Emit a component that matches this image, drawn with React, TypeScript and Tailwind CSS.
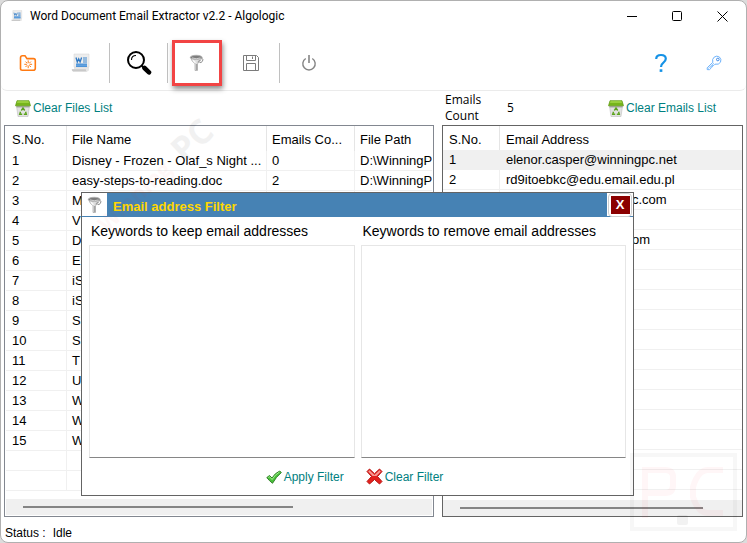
import React from "react";

const files = [
  { name: "Disney - Frozen - Olaf_s Night ...", count: "0", path: "D:\\WinningP" },
  { name: "easy-steps-to-reading.doc", count: "2", path: "D:\\WinningP" },
  { name: "M" },
  { name: "V" },
  { name: "D" },
  { name: "E" },
  { name: "iS" },
  { name: "iS" },
  { name: "S" },
  { name: "S" },
  { name: "T" },
  { name: "U" },
  { name: "W" },
  { name: "W" },
  { name: "W" },
];

const emails = [
  { no: "1", address: "elenor.casper@winningpc.net" },
  { no: "2", address: "rd9itoebkc@edu.email.edu.pl" },
  { no: "", address: "c.com", tail: true },
  { no: "", address: "" },
  { no: "", address: "om", tail: true },
];

function FolderIcon() {
  return (
    <svg width="18" height="18" viewBox="0 0 18 18" fill="none" stroke="#ff7a12" strokeWidth="1.6">
      <path d="M1.5 15V4Q1.5 1.8 3.5 1.8H6L8 4.6H14.5Q16.3 4.6 16.3 6.4V14.2Q16.3 16.2 14.3 16.2H3.2Q1.5 16.2 1.5 14.5Z" />
      <path d="M9.2 6.4V9M9.2 11.6V14.2M5.3 10.3H7.9M10.5 10.3H13.1M6.5 7.6L8.2 9.3M10.2 11.3L11.9 13M11.9 7.6L10.2 9.3M8.2 11.3L6.5 13" strokeWidth="1" />
    </svg>
  );
}

function WordIcon({ size = 20 }: { size?: number }) {
  return (
    <svg width={size} height={size} viewBox="0 0 20 20">
      <path d="M3 1h15v15.5q0 2-2 2H2q-1.5-.5-1.3-2.3H3z" fill="#e6e6e6" />
      <path d="M3 1h15v13H3z" fill="#ededed" stroke="#d2d2d2" strokeWidth=".5" />
      <path d="M.8 16.2h14q0 2.3 1.5 2.3H2.2Q.9 18.3.8 16.2z" fill="#c9c9c9" />
      <path d="M5 4.5l1.300 4.500 1.400-3.200 1.400 3.200 1.500-4.500" fill="none" stroke="#2f79c4" strokeWidth="1.3" />
      <path d="M12 5h4M12 7h4M12 9h4" stroke="#3d87d0" strokeWidth="1.2" />
      <path d="M5 10.5h11v3.5H5z" fill="#4c93d8" />
      <path d="M5 12.2h11" stroke="#8cbcec" strokeWidth=".5" />
    </svg>
  );
}

function SearchIcon() {
  return (
    <svg width="26" height="26" viewBox="0 0 26 26" fill="none" stroke="#000">
      <circle cx="10" cy="10" r="8" strokeWidth="2" />
      <path d="M5.5 10Q5.5 5.5 10 5.5" strokeWidth="1.1" />
      <path d="M15.8 15.8L18 18" strokeWidth="2" />
      <path d="M18.5 18L23 22.300" strokeWidth="4.6" strokeLinecap="round" />
    </svg>
  );
}

function FunnelIcon() {
  return (
    <svg width="16" height="18" viewBox="0 0 16 18">
      <path d="M1.5 3.5Q2.5 7.2 6 9.800V16.500H8.500V9.800Q11.500 7.500 13 3.500z" fill="#dedede" stroke="#a3a3a3" strokeWidth=".7" />
      <path d="M7.700 10V16" stroke="#8f8f8f" strokeWidth=".9" />
      <path d="M4 6.200L6.500 8.800" stroke="#fafafa" strokeWidth="1.3" />
      <path d="M10.800 6L8.800 8.500" stroke="#999" strokeWidth="1.1" />
      <ellipse cx="7.200" cy="3.300" rx="5.900" ry="2" fill="#7d7d7d" stroke="#adadad" strokeWidth=".9" />
      <path d="M3 3.900Q7.200 5.600 11.500 3.900" stroke="#d8d8d8" strokeWidth=".9" fill="none" />
      <path d="M12.500 4.200Q15.300 4.900 13.200 7.600Q12 9 10.600 8.500" fill="none" stroke="#8f8f8f" />
    </svg>
  );
}

function SaveIcon() {
  return (
    <svg width="18" height="18" viewBox="0 0 18 18" fill="none" stroke="#7b7b7b">
      <path d="M1.5 1.5H14.5L16.5 3.5V16.5H1.5zM4.5 1.5V6.5H13.5V1.5M10.5 2.5V5M4.5 16.5V9.5H13.5V16.5" />
    </svg>
  );
}

function PowerIcon() {
  return (
    <svg width="18" height="18" viewBox="0 0 18 18" fill="none" stroke="#858585" strokeWidth="1.4">
      <path d="M5.7 4.5A6.2 6.2 0 1 0 12.3 4.5" />
      <path d="M9 1V9" strokeWidth="1.6" />
    </svg>
  );
}

function HelpIcon() {
  return (
    <svg width="16" height="20" viewBox="0 0 16 20" fill="none" stroke="#1592e6" strokeWidth="2.2">
      <path d="M3.200 6Q3.200 2 8 2Q12.800 2 12.800 5.800Q12.800 8 10.200 9.800Q8 11.300 8 14" />
      <path d="M8 16.300V18.900" strokeWidth="2.7" />
    </svg>
  );
}

function KeyIcon() {
  return (
    <svg width="16" height="16" viewBox="0 0 16 16" fill="none" stroke="#6db2fb" strokeWidth="1">
      <path d="M6.800 7.300Q5.800 4.200 8.200 2.100Q10.700.2 13.400 2Q15.800 4.300 14.500 7.200Q12.800 10 9 9.200L7.800 10.400L6.600 10.300L6.500 11.700L5.200 11.800L5 13.200L3.400 14.700L1.200 14.600V12.800Z" />
      <circle cx="11.8" cy="4.5" r="1.3" stroke="#3f8be8" />
      <path d="M2 13.700L8 8" strokeWidth=".7" />
    </svg>
  );
}

function BinIcon() {
  return (
    <svg width="16" height="17" viewBox="0 0 16 17">
      <path d="M1.5 6h13l-1.5 10.5H3z" fill="#e2e2e2" stroke="#bdbdbd" strokeWidth=".6" />
      <path d="M1.5 6h13v1.5h-13z" fill="#a8a8a8" />
      <path d="M2 .7h12L15.5 5.8H.5z" fill="#76b51b" stroke="#5d9910" strokeWidth=".7" />
      <path d="M2.5 1.2h11l.5 1.5H2z" fill="#a4d84a" />
      <path d="M6.3 10.5L8 8L9.7 10.5M10.6 11.8L11.3 14.3H8.8M7.2 14.3H4.7L5.5 11.8" fill="none" stroke="#5ba31c" strokeWidth="1.4" />
    </svg>
  );
}

function CheckIcon() {
  return (
    <svg width="16" height="16" viewBox="0 0 16 16">
      <path d="M.8 8.6L3.5 6.5L6 9Q9 4 13.8 2L15.3 3.6Q10 8 6.5 14.3Q3.5 12 .8 8.6z" fill="#4ac03b" stroke="#28751f" strokeWidth=".9" />
      <path d="M2.3 8.5L3.5 7.7L6.1 10.5Q9 5.5 13.5 3" fill="none" stroke="#a2ef8e" />
    </svg>
  );
}

function CrossIcon() {
  return (
    <svg width="17" height="17" viewBox="0 0 17 17">
      <path d="M3.5 1L8.5 5.7L13.5 1L16 3.5L11.5 8.5L16 13.5L13.5 16L8.5 11.5L3.5 16L1 13.5L5.5 8.5L1 3.5z" fill="#e3211d" stroke="#b81512" strokeLinejoin="round" />
      <path d="M3.5 2.3L8.5 7L13.5 2.3L14.8 3.6L10.5 8H6.5L2.2 3.6z" fill="#f89a94" />
    </svg>
  );
}

function ToolButton({ label, children }: { label: string; children: React.ReactNode }) {
  return (
    <button aria-label={label} className="flex h-[45px] w-[53px] items-center justify-center">
      {children}
    </button>
  );
}

function Separator() {
  return <div className="mx-0.5 h-10 w-px bg-[#c0c0c0]" />;
}

function LinkButton({ icon, children }: { icon: React.ReactNode; children: React.ReactNode }) {
  return (
    <button className="flex items-center gap-0.5 whitespace-nowrap text-xs text-[#008080]">
      {icon}
      {children}
    </button>
  );
}

function TitleBar() {
  return (
    <header className="flex h-[30px] shrink-0 items-center pl-2.5">
      <WordIcon size={12} />
      <h1 className="ml-[7px] flex-1 font-[Roboto,sans-serif] text-xs">
        Word Document Email Extractor v2.2 - Algologic
      </h1>
      <div className="flex pr-px">
        <button aria-label="Minimize" className="flex w-[45px] justify-center">
          <svg width="11" height="11" stroke="#000"><path d="M0 5.5H10" /></svg>
        </button>
        <button aria-label="Maximize" className="flex w-[45px] justify-center">
          <svg width="11" height="11" fill="none" stroke="#000"><rect x=".5" y=".5" width="9" height="9" rx="1" /></svg>
        </button>
        <button aria-label="Close" className="flex w-[45px] justify-center">
          <svg width="11" height="11" fill="none" stroke="#000"><path d="M.5 .5L10.5 10.5M10.5 .5L.5 10.5" /></svg>
        </button>
      </div>
    </header>
  );
}

function Toolbar() {
  return (
    <div className="flex h-[60px] shrink-0 items-center rounded-b-md border-b border-[#ebebeb] pt-1 pr-1.5">
      <ToolButton label="Add folder"><FolderIcon /></ToolButton>
      <ToolButton label="Add document"><WordIcon /></ToolButton>
      <Separator />
      <ToolButton label="Search"><SearchIcon /></ToolButton>
      <Separator />
      <button
        aria-label="Filter"
        className="mx-0.5 flex h-[46px] w-[50px] items-center justify-center border-3 border-[#f24444] shadow-[1px_3px_5px_rgba(0,0,0,0.45)]"
      >
        <FunnelIcon />
      </button>
      <ToolButton label="Save"><SaveIcon /></ToolButton>
      <Separator />
      <ToolButton label="Exit"><PowerIcon /></ToolButton>
      <div className="flex-1" />
      <ToolButton label="Help"><HelpIcon /></ToolButton>
      <ToolButton label="Register"><KeyIcon /></ToolButton>
    </div>
  );
}

function FilesTable() {
  const rows = Array.from({ length: 17 }, (_, i) => files[i]);
  return (
    <section className="flex min-w-0 flex-1 flex-col overflow-hidden border border-[#828790] px-px pb-px">
      <div className="min-h-0 flex-1 overflow-hidden">
        <table className="w-full table-fixed border-separate border-spacing-0 text-left leading-[19px]">
          <thead>
            <tr className="h-[25px] [&>th]:border-r [&>th]:border-[#e5e5e5] [&>th]:pt-0.5 [&>th]:font-normal">
              <th className="w-[61px] pl-1.5">S.No.</th>
              <th className="w-[200px] pl-[5px]">File Name</th>
              <th className="w-[88px] pl-[5px]">Emails Co...</th>
              <th className="border-r-0! pl-[5px]">File Path</th>
            </tr>
          </thead>
          <tbody>
            {rows.map((file, i) => (
              <tr key={i} className="h-5 [&>td]:border-r [&>td]:border-b [&>td]:border-[#f0f0f0] [&>td]:whitespace-nowrap">
                <td className="pl-1.5">{file ? i + 1 : ""}</td>
                <td className="pl-[5px]">{file?.name}</td>
                <td className="pl-[5px]">{file?.count}</td>
                <td className="border-r-0! pl-[5px]">{file?.path}</td>
              </tr>
            ))}
          </tbody>
        </table>
      </div>
      <div className="flex h-4 shrink-0 items-center bg-[#f0f0f0] pl-[17px]">
        <div className="h-0.5 w-[66%] bg-[#858585]" />
      </div>
    </section>
  );
}

function EmailsTable() {
  const rows = Array.from({ length: 17 }, (_, i) => emails[i]);
  return (
    <section className="flex w-[301px] shrink-0 flex-col overflow-hidden border border-[#646464]">
      <div className="min-h-0 flex-1 overflow-hidden">
        <table className="w-full table-fixed border-separate border-spacing-0 text-left leading-[19px]">
          <thead>
            <tr className="h-6 [&>th]:pt-0.5 [&>th]:font-normal">
              <th className="w-[57px] border-r border-[#e5e5e5] pl-1.5">S.No.</th>
              <th className="pl-1.5">Email Address</th>
            </tr>
          </thead>
          <tbody>
            {rows.map((email, i) => (
              <tr
                key={i}
                className={`h-5 [&>td]:border-b [&>td]:border-[#f0f0f0] [&>td]:whitespace-nowrap ${i === 0 ? "bg-[#f0f0f0]" : ""}`}
              >
                <td className="border-r pl-1.5">{email?.no}</td>
                <td className={email?.tail ? "pl-[132px]" : "pl-1.5"}>{email?.address}</td>
              </tr>
            ))}
          </tbody>
        </table>
      </div>
      <div className="flex h-4 shrink-0 items-center bg-[#f0f0f0] pl-[17px]">
        <div className="h-0.5 w-[243px] bg-[#858585]" />
      </div>
    </section>
  );
}

function FilterDialog() {
  return (
    <div
      role="dialog"
      aria-labelledby="filter-title"
      className="absolute top-[191px] left-20 flex h-[304px] w-[553px] flex-col border border-[#646464] bg-white"
    >
      <div className="flex h-6 shrink-0 items-center border-b border-[#4682b4]">
        <div className="flex w-[25px] justify-center"><FunnelIcon /></div>
        <h2 id="filter-title" className="flex h-6 flex-1 items-center bg-[#4682b4] pt-1 pl-1.5 text-[13px] font-bold text-[#ffd700]">
          Email address Filter
        </h2>
        <button
          aria-label="Close filter"
          className="mx-px flex h-6 w-6 items-center justify-center rounded-sm border border-[#cfcfcf] bg-white"
        >
          <span className="flex h-[18px] w-[19px] items-center justify-center bg-[#8b0000] text-[13px] font-bold text-white">X</span>
        </button>
      </div>
      <div className="grid flex-1 grid-cols-2 gap-1.5 px-[7px] text-sm">
        <div className="flex flex-col">
          <label htmlFor="keep" className="flex h-7 items-center pl-0.5 whitespace-nowrap">Keywords to keep email addresses</label>
          <textarea id="keep" className="flex-1 resize-none border border-[#e6e6e6] border-b-[#868686] p-1" />
        </div>
        <div className="flex flex-col">
          <label htmlFor="remove" className="flex h-7 items-center pl-0.5 whitespace-nowrap">Keywords to remove email addresses</label>
          <textarea id="remove" className="flex-1 resize-none border border-[#e6e6e6] border-b-[#868686] p-1" />
        </div>
      </div>
      <div className="flex h-[37px] items-center justify-center gap-[22px] pr-1.5">
        <LinkButton icon={<CheckIcon />}>Apply Filter</LinkButton>
        <LinkButton icon={<CrossIcon />}>Clear Filter</LinkButton>
      </div>
    </div>
  );
}

function Watermarks() {
  return (
    <div className="pointer-events-none absolute inset-0">
      <svg className="absolute top-[100px] left-[90px]" width="150" height="150" fontFamily="Open Sans, sans-serif" fontWeight="bold">
        <g transform="translate(16 132) rotate(-43)">
          <text fontSize="22" fill="#ff2020" opacity=".03">Winning</text>
          <text x="104" y="2" fontSize="34" fill="#000" opacity=".05">PC</text>
        </g>
      </svg>
      <svg className="absolute right-[9px] bottom-2.5" width="107" height="79" fill="none">
        <rect x="2" y="2" width="103" height="74" stroke="#000" strokeWidth="4" opacity=".03" />
        <path d="M15 65V17H35Q43 17 43 24V32Q43 40 35 40H15M93 17H78Q68 17 63 34V44Q68 60 78 60H93" stroke="#ff2030" strokeWidth="6" opacity=".04" />
        <rect x="47" y="62" width="11" height="10" rx="2" fill="#000" opacity=".05" />
      </svg>
    </div>
  );
}

export default function App() {
  return (
    <div className="h-screen overflow-hidden bg-[#dcdcdc]">
      <main className="relative flex h-full flex-col rounded-lg border border-[#b0b0b0] bg-white font-['Liberation_Sans',Arial,sans-serif] text-[13px] text-black">
        <TitleBar />
        <Toolbar />
        <div className="flex h-[34px] shrink-0 items-center pl-3.5">
          <div className="flex-1">
            <LinkButton icon={<BinIcon />}>Clear Files List</LinkButton>
          </div>
          <div className="flex w-[301px] items-center font-['Open_Sans',sans-serif] text-xs leading-4">
            <div className="w-[62px]">
              <div>Emails</div>
              <div>Count</div>
            </div>
            <div className="flex-1">5</div>
            <div className="pr-[30px] font-['Liberation_Sans',Arial,sans-serif]">
              <LinkButton icon={<BinIcon />}>Clear Emails List</LinkButton>
            </div>
          </div>
        </div>
        <div className="flex min-h-0 flex-1 gap-2 px-[3px]">
          <FilesTable />
          <EmailsTable />
        </div>
        <footer className="flex h-[25px] shrink-0 items-center gap-[7px] pt-1.5 pl-1 text-xs">
          <span>Status :</span>
          <span>Idle</span>
        </footer>
        <FilterDialog />
        <Watermarks />
      </main>
    </div>
  );
}
